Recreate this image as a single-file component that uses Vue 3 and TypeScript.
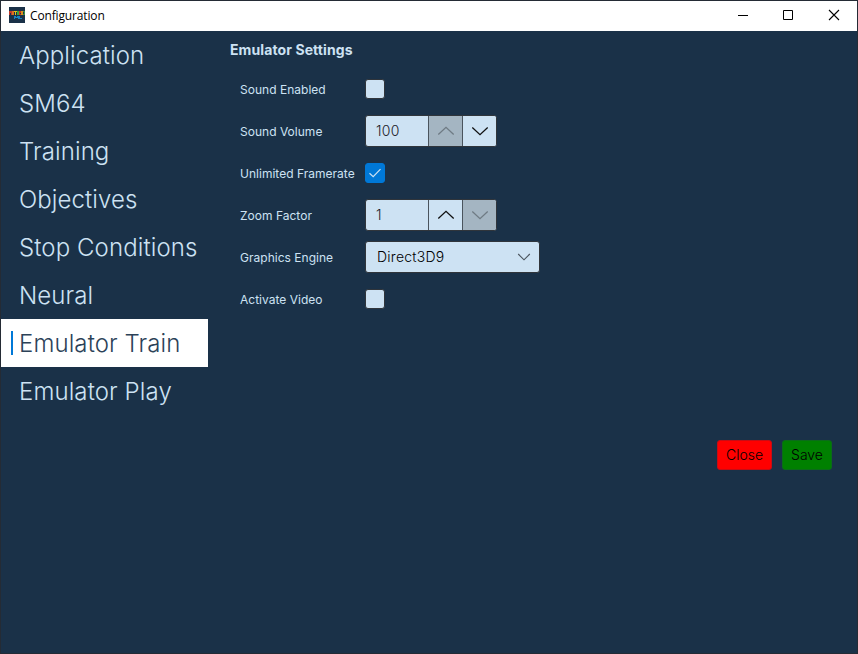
<script setup lang="ts">
import { ref } from 'vue'

interface SpinField { value: number; min: number; max: number }

const sections: string[] = [
  'Application', 'SM64', 'Training', 'Objectives',
  'Stop Conditions', 'Neural', 'Emulator Train', 'Emulator Play',
]
const selected = ref('Emulator Train')
const soundEnabled = ref(false)
const unlimitedFramerate = ref(true)
const activateVideo = ref(false)
const engine = ref('Direct3D9')
const volume = ref<SpinField>({ value: 100, min: 0, max: 100 })
const zoom = ref<SpinField>({ value: 1, min: 1, max: 8 })

function step(field: SpinField, delta: number): void {
  field.value = Math.min(field.max, Math.max(field.min, field.value + delta))
}
</script>

<template>
  <div class="window">
    <header class="titlebar">
      <svg class="logo" width="16" height="16" viewBox="0 0 16 16" shape-rendering="crispEdges">
        <rect width="16" height="16" fill="#1a3148" />
        <path d="M0 4h3v4H0z" fill="#c23a2a" />
        <path d="M3 4h2v4H3z" fill="#d9731f" />
        <path d="M5 4h3v1H7v3H6V5H5z" fill="#e3c21b" />
        <path d="M8 4h2v4H8z" fill="#3ba53a" />
        <path d="M10 4h2v4h-2z" fill="#c9301f" />
        <path d="M12 4h2v4h-2z" fill="#d9901c" />
        <path d="M14 4h2v4h-2z" fill="#3f8f44" />
        <path d="M1 6h1v2H1zM11 6h1v1h-1zM14 5h1v2h-1z" fill="#1a3148" />
        <path d="M5 9h2v1h1V9h2v3H9v-1H6v1H5zM10 9h1v2h2v1h-3z" fill="#1583c4" />
      </svg>
      <span class="title">Configuration</span>
      <div class="controls">
        <svg width="46" height="30" viewBox="0 0 46 30"><path d="M18 14.5h10" stroke="#000" /></svg>
        <svg width="46" height="30" viewBox="0 0 46 30"><path d="M17.500 9.500h9v9h-9z" fill="none" stroke="#000" /></svg>
        <svg width="46" height="30" viewBox="0 0 46 30"><path d="M17 9l10 10M27 9l-10 10" stroke="#000" stroke-width="1.1" /></svg>
      </div>
    </header>
    <div class="body">
      <nav class="nav">
        <div
          v-for="name in sections"
          :key="name"
          class="nav-item"
          :class="{ active: name === selected }"
          @click="selected = name"
        >
          <span class="pipe"></span><span class="nav-text">{{ name }}</span>
        </div>
      </nav>
      <main class="content">
        <h1>Emulator Settings</h1>
        <div class="form">
          <label>Sound Enabled</label>
          <button class="check" :class="{ on: soundEnabled }" @click="soundEnabled = !soundEnabled">
            <svg v-if="soundEnabled" width="18" height="18" viewBox="1 1 18 18"><path d="M4.500 10.200l3.700 3.400 7.300-7.400" /></svg>
          </button>

          <label>Sound Volume</label>
          <div class="spin">
            <span class="value">{{ volume.value }}</span>
            <button :disabled="volume.value >= volume.max" @click="step(volume, 1)">
              <svg width="18" height="10" viewBox="0 0 18 10"><path d="M1.300 8.500L9 1.300l7.700 7.200" /></svg>
            </button>
            <button :disabled="volume.value <= volume.min" @click="step(volume, -1)">
              <svg width="18" height="10" viewBox="0 0 18 10"><path d="M1.300 1.500L9 8.700l7.700-7.200" /></svg>
            </button>
          </div>

          <label>Unlimited Framerate</label>
          <button class="check" :class="{ on: unlimitedFramerate }" @click="unlimitedFramerate = !unlimitedFramerate">
            <svg v-if="unlimitedFramerate" width="18" height="18" viewBox="1 1 18 18"><path d="M4.500 10.200l3.700 3.400 7.300-7.400" /></svg>
          </button>

          <label>Zoom Factor</label>
          <div class="spin">
            <span class="value">{{ zoom.value }}</span>
            <button :disabled="zoom.value >= zoom.max" @click="step(zoom, 1)">
              <svg width="18" height="10" viewBox="0 0 18 10"><path d="M1.300 8.500L9 1.300l7.700 7.200" /></svg>
            </button>
            <button :disabled="zoom.value <= zoom.min" @click="step(zoom, -1)">
              <svg width="18" height="10" viewBox="0 0 18 10"><path d="M1.300 1.500L9 8.700l7.700-7.200" /></svg>
            </button>
          </div>

          <label>Graphics Engine</label>
          <div class="combo">
            <span>{{ engine }}</span>
            <svg width="14" height="8" viewBox="0 0 14 8"><path d="M1.200 1L7 6.800 12.800 1" /></svg>
          </div>

          <label>Activate Video</label>
          <button class="check" :class="{ on: activateVideo }" @click="activateVideo = !activateVideo">
            <svg v-if="activateVideo" width="18" height="18" viewBox="1 1 18 18"><path d="M4.500 10.200l3.700 3.400 7.300-7.400" /></svg>
          </button>
        </div>
        <footer class="actions">
          <button class="action close">Close</button>
          <button class="action save">Save</button>
        </footer>
      </main>
    </div>
  </div>
</template>

<style>
body {
  margin: 0;
  overflow: hidden;
}
</style>

<style scoped>
.window {
  box-sizing: border-box;
  width: 858px;
  height: 654px;
  border: 1px solid #242b35;
  background: #1a3148;
  color: #cde2f3;
  font-family: Inter, sans-serif;
  display: flex;
  flex-direction: column;
}
.titlebar {
  height: 30px;
  flex: none;
  background: #fff;
  color: #000;
  display: flex;
  align-items: center;
  padding-left: 8px;
}
.logo {
  margin-top: -2px;
}
.title {
  font: 12px/16px "Open Sans", sans-serif;
  letter-spacing: -0.15px;
  margin: 0 0 0 5px;
}
.controls {
  margin-left: auto;
  margin-right: -1px;
  display: flex;
}
.body {
  flex: 1;
  display: flex;
}
.nav {
  width: 207px;
  flex: none;
}
.nav-item {
  box-sizing: border-box;
  height: 48px;
  padding-left: 10px;
  display: flex;
  align-items: center;
  gap: 6px;
  font-size: 24px;
  font-weight: 300;
  letter-spacing: 0.1px;
  white-space: nowrap;
}
.nav-text {
  padding-top: 1px;
}
.pipe {
  width: 2px;
  height: 24px;
}
.active {
  background: #fff;
  color: #2c4258;
}
.active .pipe {
  background: #0078d7;
}
.content {
  flex: 1;
  padding: 8px 25px 0 22px;
}
h1 {
  margin: 0;
  height: 21px;
  line-height: 21px;
  font-size: 14px;
  font-weight: 700;
  letter-spacing: 0.1px;
}
.form {
  display: grid;
  grid-template-columns: 125px auto;
  grid-auto-rows: 42px;
  align-items: center;
  justify-content: start;
  margin: 8px 0 0 10px;
}
label {
  font-size: 12px;
  letter-spacing: 0.02px;
  white-space: nowrap;
}
button {
  font: inherit;
  padding: 0;
  border: 0;
}
.check {
  box-sizing: border-box;
  width: 20px;
  height: 20px;
  border: 1px solid #30353b;
  border-radius: 3px;
  background: #cde2f3;
  display: grid;
  place-items: center;
}
.check.on {
  border-color: #0078d7;
  background: #0078d7;
}
.check path {
  fill: none;
  stroke: #cde2f3;
  stroke-width: 1.2;
}
.spin,
.combo {
  box-sizing: border-box;
  height: 32px;
  border: 1px solid #30353b;
  border-radius: 3px;
  background: #cde2f3;
  color: #1b2126;
  display: flex;
  align-items: center;
  font-size: 14px;
  overflow: hidden;
}
.spin {
  width: 132px;
}
.value {
  flex: 1;
  padding: 0 0 2px 10px;
  font-weight: 300;
  letter-spacing: 0.3px;
}
.combo span {
  padding-bottom: 2px;
  letter-spacing: 0.25px;
}
.spin button {
  width: 34px;
  height: 30px;
  box-sizing: border-box;
  border-left: 1px solid #4a545d;
  background: #cde2f3;
  display: grid;
  place-items: center;
}
.spin path,
.combo path {
  fill: none;
  stroke: #111;
  stroke-width: 1.3;
}
.spin button:disabled {
  background: #a4b5c2;
}
.spin button:disabled path {
  stroke: #6f7b84;
}
.combo {
  width: 175px;
  justify-content: space-between;
  padding: 0 8px 0 11px;
  color: #000;
  font-weight: 300;
}
.combo path {
  stroke: #4a545d;
  stroke-width: 1.1;
}
.actions {
  display: flex;
  justify-content: flex-end;
  gap: 10px;
  margin-top: 120px;
}
.action {
  box-sizing: border-box;
  height: 30px;
  padding-bottom: 2px;
  border: 1px solid;
  border-radius: 3px;
  color: #000;
  font-size: 14px;
  font-weight: 300;
}
.close {
  width: 55px;
  background: #f00;
  border-color: #c80c14;
}
.save {
  width: 50px;
  background: #008000;
  border-color: #0b6c19;
}
</style>
